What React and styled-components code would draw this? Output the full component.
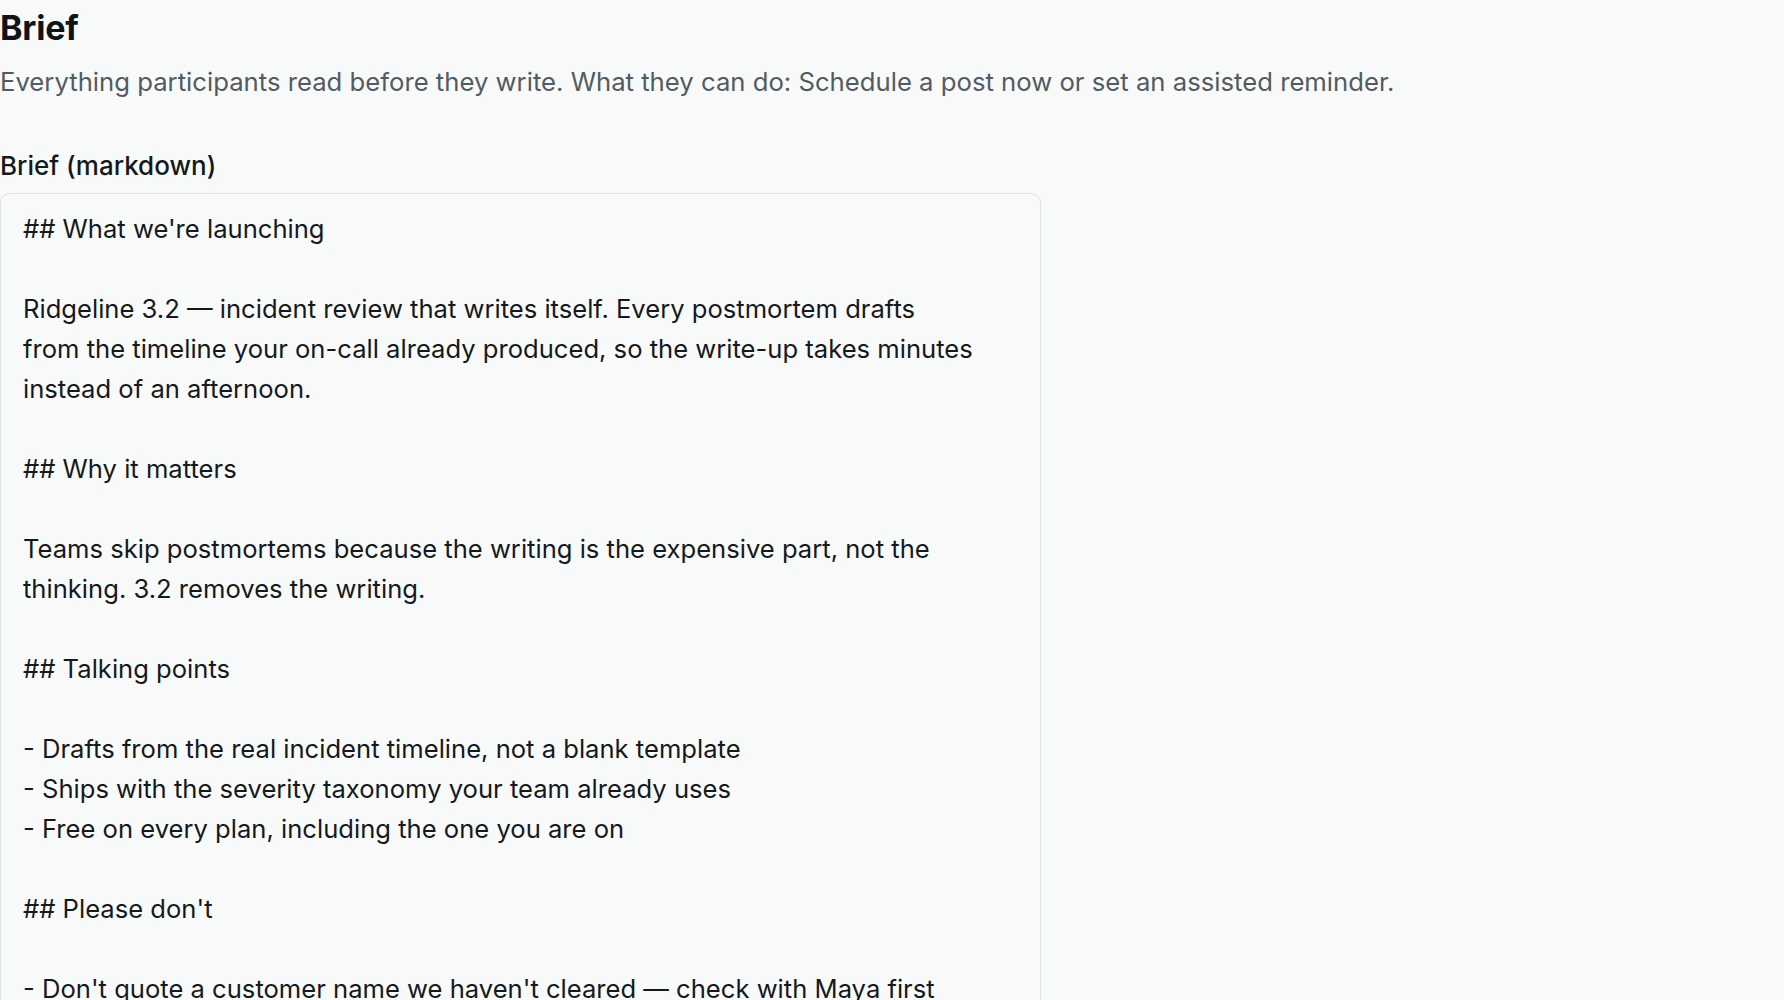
import React from 'react'
import styled, { createGlobalStyle } from 'styled-components'

const brief = `## What we're launching

Ridgeline 3.2 — incident review that writes itself. Every postmortem drafts
from the timeline your on-call already produced, so the write-up takes minutes
instead of an afternoon.

## Why it matters

Teams skip postmortems because the writing is the expensive part, not the
thinking. 3.2 removes the writing.

## Talking points

- Drafts from the real incident timeline, not a blank template
- Ships with the severity taxonomy your team already uses
- Free on every plan, including the one you are on

## Please don't

- Don't quote a customer name we haven't cleared — check with Maya first
- Don't promise dates for 3.3`

const GlobalStyle = createGlobalStyle`
  html, body {
    margin: 0;
    padding: 0;
    background: #f8fafa;
  }
  body {
    font-family: Inter, 'Liberation Sans', Arial, sans-serif;
    color: #16191c;
    overflow: hidden;
  }
`

const Page = styled.main`
  display: flex;
  flex-direction: column;
`

const Title = styled.h1`
  margin: 0;
  font-size: 34px;
  line-height: 56px;
  font-weight: 700;
  letter-spacing: -0.2px;
  color: #111417;
`

const Subtitle = styled.p`
  margin: 8px 0 0;
  font-size: 25.7px;
  line-height: 36px;
  color: #535b62;
`

const Field = styled.label`
  display: flex;
  flex-direction: column;
  gap: 10px;
  margin-top: 49px;
`

const FieldLabel = styled.span`
  font-size: 26px;
  line-height: 34px;
  font-weight: 500;
  color: #16191c;
`

const Editor = styled.textarea`
  box-sizing: border-box;
  width: 1041px;
  height: 900px;
  margin: 0;
  padding: 15px 22px;
  border: 1px solid #dfe2e5;
  border-radius: 10px;
  background: #f8fafa;
  font-family: Inter, 'Liberation Sans', Arial, sans-serif;
  font-size: 25.6px;
  line-height: 40px;
  color: #16191c;
  resize: none;
  outline: none;
  overflow: hidden;
  white-space: pre-wrap;
`

export default function App() {
  return (
    <>
      <GlobalStyle />
      <Page>
        <Title>Brief</Title>
        <Subtitle>
          Everything participants read before they write. What they can do:
          Schedule a post now or set an assisted reminder.
        </Subtitle>
        <Field>
          <FieldLabel>Brief (markdown)</FieldLabel>
          <Editor defaultValue={brief} spellCheck={false} />
        </Field>
      </Page>
    </>
  )
}
